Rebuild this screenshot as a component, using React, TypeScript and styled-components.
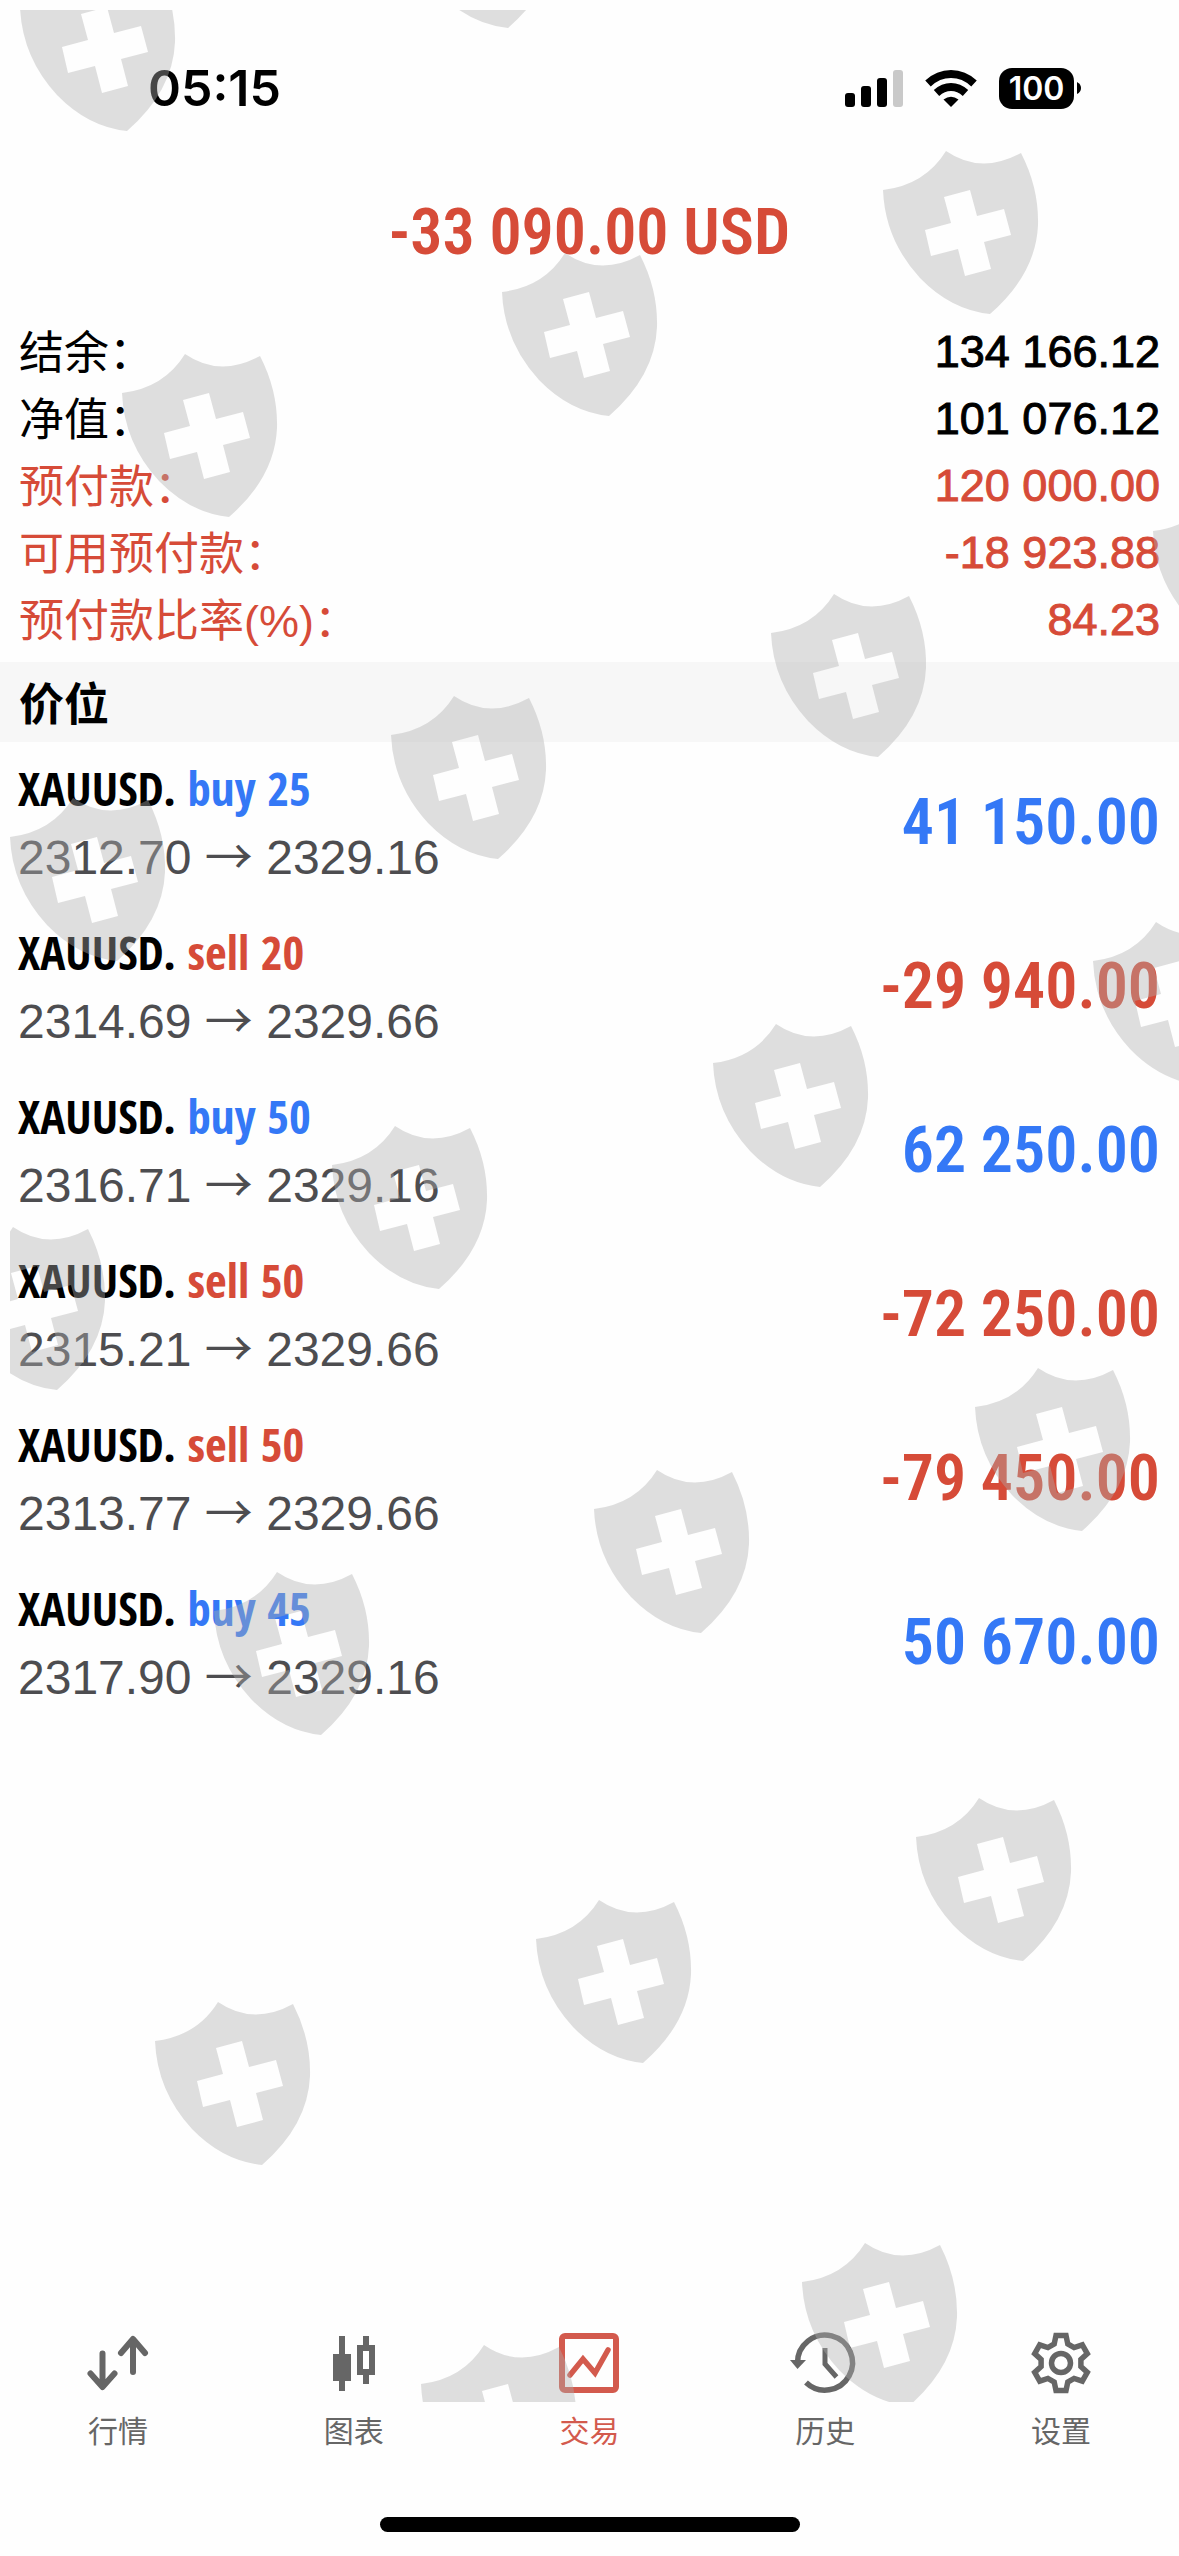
import React from "react";
import styled, { createGlobalStyle } from "styled-components";

const RED = "#d64b38";
const BLUE = "#3478f6";
const GREY = "#666666";

const SANS = '"Liberation Sans", "Noto Sans CJK SC", sans-serif';
const CJK = '"Noto Sans CJK SC", "Liberation Sans", sans-serif';
const AMOUNT = '"Avenir Next Condensed", "Roboto Condensed", sans-serif';
const DEAL = '"Avenir Next Condensed", "Open Sans Condensed", sans-serif';
const SYSTEM = 'Inter, "Liberation Sans", sans-serif';

const GlobalStyle = createGlobalStyle`
  *, *::before, *::after { box-sizing: border-box; }
  body { margin: 0; background: #fefefe; }
`;

const Screen = styled.div`
  position: relative;
  display: flex;
  flex-direction: column;
  min-height: 100vh;
  overflow: hidden;
  background: #fefefe;
  color: #000;
  font-family: ${SANS};
`;

const StatusBar = styled.header`
  display: flex;
  align-items: center;
  justify-content: space-between;
  height: 176px;
  padding: 0 98px 0 148px;
`;

const Clock = styled.time`
  font: 600 50px/60px ${SYSTEM};
`;

const StatusIcons = styled.div`
  display: flex;
  align-items: center;
  gap: 22px;
`;

const Battery = styled.div`
  display: flex;
  align-items: center;
  gap: 3px;
`;

const BatteryBody = styled.span`
  width: 75px;
  border-radius: 13px;
  background: #000;
  color: #fff;
  text-align: center;
  font: 600 32px/41px ${SYSTEM};
`;

const Total = styled.h1`
  margin: 0;
  padding: 12px 0;
  text-align: center;
  color: ${RED};
  font: 600 64px/90px ${AMOUNT};
`;

const Summary = styled.dl`
  margin: 0;
  padding: 28px 19px 9px;
`;

const SummaryRow = styled.div<{ $alert?: boolean }>`
  display: flex;
  align-items: flex-start;
  justify-content: space-between;
  height: 67px;
  color: ${(p) => (p.$alert ? RED : "#000")};
`;

const SummaryLabel = styled.dt`
  font: 400 45px/63px ${CJK};
`;

const Latin = styled.span`
  font-family: ${SANS};
`;

const SummaryValue = styled.dd`
  margin: 0;
  font: 400 45px/67px ${SANS};
  -webkit-text-stroke: 1px currentColor;
`;

const SectionTitle = styled.h2`
  margin: 0;
  padding: 0 19px;
  background: #f7f7f7;
  font: 600 45px/80px ${CJK};
`;

const Positions = styled.ul`
  flex: 1;
  margin: 0;
  padding: 0;
  list-style: none;
`;

const Position = styled.li`
  display: flex;
  align-items: center;
  justify-content: space-between;
  height: 164px;
  padding: 0 19px 2px 18px;
`;

const Deal = styled.div`
  font: 600 47px/70px ${DEAL};
`;

const Side = styled.span<{ $color: string }>`
  color: ${(p) => p.$color};
`;

const Prices = styled.div`
  color: #4d4d50;
  font: 400 48px/70px ${SANS};
`;

const Arrow = styled.span`
  font-family: ${CJK};
  line-height: 1;
`;

const Profit = styled.strong<{ $color: string }>`
  color: ${(p) => p.$color};
  font: 600 64px/90px ${AMOUNT};
`;

const TabBar = styled.nav`
  display: grid;
  grid-template-columns: repeat(5, 1fr);
  padding-bottom: 66px;
`;

const Tab = styled.a<{ $active?: boolean }>`
  display: flex;
  flex-direction: column;
  align-items: center;
  gap: 12px;
  color: ${(p) => (p.$active ? "#d35a4d" : GREY)};
  font: 400 30px/44px ${CJK};
  text-decoration: none;
`;

const HomeIndicator = styled.div`
  align-self: center;
  width: 420px;
  height: 15px;
  margin-bottom: 24px;
  border-radius: 8px;
  background: #000;
`;

const Watermark = styled.svg`
  position: absolute;
  inset: 10px 0 154px 10px;
  width: calc(100% - 10px);
  height: 2392px;
  pointer-events: none;
`;

const summary = [
  { label: "结余：", value: "134 166.12" },
  { label: "净值：", value: "101 076.12" },
  { label: "预付款：", value: "120 000.00", alert: true },
  { label: "可用预付款：", value: "-18 923.88", alert: true },
  { label: "预付款比率", latin: "(%)", tail: "：", value: "84.23", alert: true },
];

const positions = [
  { side: "buy", lots: 25, open: "2312.70", now: "2329.16", profit: "41 150.00" },
  { side: "sell", lots: 20, open: "2314.69", now: "2329.66", profit: "-29 940.00" },
  { side: "buy", lots: 50, open: "2316.71", now: "2329.16", profit: "62 250.00" },
  { side: "sell", lots: 50, open: "2315.21", now: "2329.66", profit: "-72 250.00" },
  { side: "sell", lots: 50, open: "2313.77", now: "2329.66", profit: "-79 450.00" },
  { side: "buy", lots: 45, open: "2317.90", now: "2329.16", profit: "50 670.00" },
];

const TOOTH: [number, number][] = [[-6.8, -19], [-5, -27.5], [5, -27.5], [6.8, -19]];

const gearPoints = [0, 60, 120, 180, 240, 300]
  .flatMap((deg) => {
    const a = (deg * Math.PI) / 180;
    return TOOTH.map(([x, y]) =>
      [32 + x * Math.cos(a) - y * Math.sin(a), 32 + x * Math.sin(a) + y * Math.cos(a)]
        .map((n) => n.toFixed(1))
        .join(",")
    );
  })
  .join(" ");

const icons: Record<string, React.ReactNode> = {
  quotes: (
    <g fill="none" stroke="currentColor" strokeWidth="6" strokeLinecap="round" strokeLinejoin="round">
      <path d="M16.5 22.5V55M4.5 42.5L16.5 56L28.5 42.5" />
      <path d="M47 41V9M35 22L47 8L59 22" />
    </g>
  ),
  charts: (
    <g fill="currentColor">
      <path d="M17 5h6v18h6v27h-6v10h-6V50h-6V23h6z" />
      <path fillRule="evenodd" d="M41 5h6v9h6v30h-6v9h-6v-9h-6V14h6zM41 20v18h6V20z" />
    </g>
  ),
  trade: (
    <g fill="none" stroke="currentColor">
      <rect x="5" y="5" width="54" height="54" rx="3" strokeWidth="6" />
      <path d="M13 44L26 28L38 42L51 19" strokeWidth="5.5" strokeLinecap="round" />
    </g>
  ),
  history: (
    <g fill="none" stroke="currentColor" strokeWidth="5.5">
      <path d="M4.5 32A27.5 27.5 0 1 1 13 51.5" />
      <path d="M32 17V33L43.5 46" strokeWidth="5" />
      <path d="M-3 29H13L4.5 38z" fill="currentColor" stroke="none" />
    </g>
  ),
  settings: (
    <g fill="none" stroke="currentColor" strokeWidth="5.5">
      <polygon points={gearPoints} />
      <circle cx="32" cy="32" r="9.5" />
    </g>
  ),
};

const tabs = [
  { id: "quotes", label: "行情" },
  { id: "charts", label: "图表" },
  { id: "trade", label: "交易", active: true },
  { id: "history", label: "历史" },
  { id: "settings", label: "设置" },
];

/* Left shoulder of every shield in the watermark lattice. */
const shields: [number, number][] = [
  [20, 7], [401, -96],
  [122, 393], [502, 292], [883, 190],
  [10, 837], [391, 735], [771, 633], [1153, 531],
  [-50, 1266], [332, 1165], [713, 1063], [1093, 961],
  [214, 1611], [594, 1509], [975, 1407],
  [155, 2041], [536, 1939], [916, 1837],
  [421, 2384], [802, 2282],
];

function ShieldWatermark() {
  return (
    <Watermark aria-hidden="true">
      <defs>
        <path
          id="shield"
          fillRule="evenodd"
          d="M0 0Q42 -5 63 -39Q98 -15 138 -37Q156 -2 155 35Q153 84 107 124Q68 120 37 88Q2 50 0 0Z
             M61 7L68 33L42 40L48 66L75 59L82 86L108 79L101 52L128 45L121 19L94 26L87 0Z"
        />
      </defs>
      <g fill="rgba(175, 175, 175, 0.4)">
        {shields.map(([x, y]) => (
          <use key={`${x},${y}`} href="#shield" x={x - 10} y={y - 10} />
        ))}
      </g>
    </Watermark>
  );
}

function SignalIcon() {
  return (
    <svg width="58" height="41" viewBox="0 0 58 41" role="img" aria-label="signal">
      <rect x="0" y="25" width="10" height="14" rx="3" />
      <rect x="16" y="18" width="10" height="21" rx="3" />
      <rect x="32" y="10" width="10" height="29" rx="3" />
      <rect x="48" y="2" width="10" height="37" rx="3" fill="#c9c9c9" />
    </svg>
  );
}

function WifiIcon() {
  return (
    <svg width="52" height="41" viewBox="0 0 52 41" role="img" aria-label="wifi">
      <g fill="none" stroke="#000" strokeWidth="8">
        <path d="M3 15.500Q13 6 26 6T49 15.500" />
        <path d="M11.500 25Q18 19 26 19T40.500 25" />
      </g>
      <path d="M18.500 31.500Q26 26 33.500 31.500L26 39z" />
    </svg>
  );
}

export default function App() {
  return (
    <Screen>
      <GlobalStyle />
      <StatusBar>
        <Clock>05:15</Clock>
        <StatusIcons>
          <SignalIcon />
          <WifiIcon />
          <Battery>
            <BatteryBody>100</BatteryBody>
            <svg width="4" height="12" viewBox="0 0 4 12" aria-hidden="true">
              <path d="M0 0Q4 2 4 6T0 12z" />
            </svg>
          </Battery>
        </StatusIcons>
      </StatusBar>

      <Total>-33 090.00 USD</Total>

      <Summary>
        {summary.map((row) => (
          <SummaryRow key={row.value} $alert={row.alert}>
            <SummaryLabel>
              {row.label}
              {row.latin && <Latin>{row.latin}</Latin>}
              {row.tail}
            </SummaryLabel>
            <SummaryValue>{row.value}</SummaryValue>
          </SummaryRow>
        ))}
      </Summary>

      <SectionTitle>价位</SectionTitle>

      <Positions>
        {positions.map((p) => (
          <Position key={p.open}>
            <div>
              <Deal>
                XAUUSD. <Side $color={p.side === "buy" ? BLUE : RED}>{p.side} {p.lots}</Side>
              </Deal>
              <Prices>
                {p.open} <Arrow>→</Arrow> {p.now}
              </Prices>
            </div>
            <Profit $color={p.profit.startsWith("-") ? RED : BLUE}>{p.profit}</Profit>
          </Position>
        ))}
      </Positions>

      <TabBar>
        {tabs.map((t) => (
          <Tab key={t.id} href={`#${t.id}`} $active={t.active} aria-current={t.active ? "page" : undefined}>
            <svg width="64" height="64" viewBox="0 0 64 64" overflow="visible" aria-hidden="true">
              {icons[t.id]}
            </svg>
            {t.label}
          </Tab>
        ))}
      </TabBar>
      <HomeIndicator />
      <ShieldWatermark />
    </Screen>
  );
}
